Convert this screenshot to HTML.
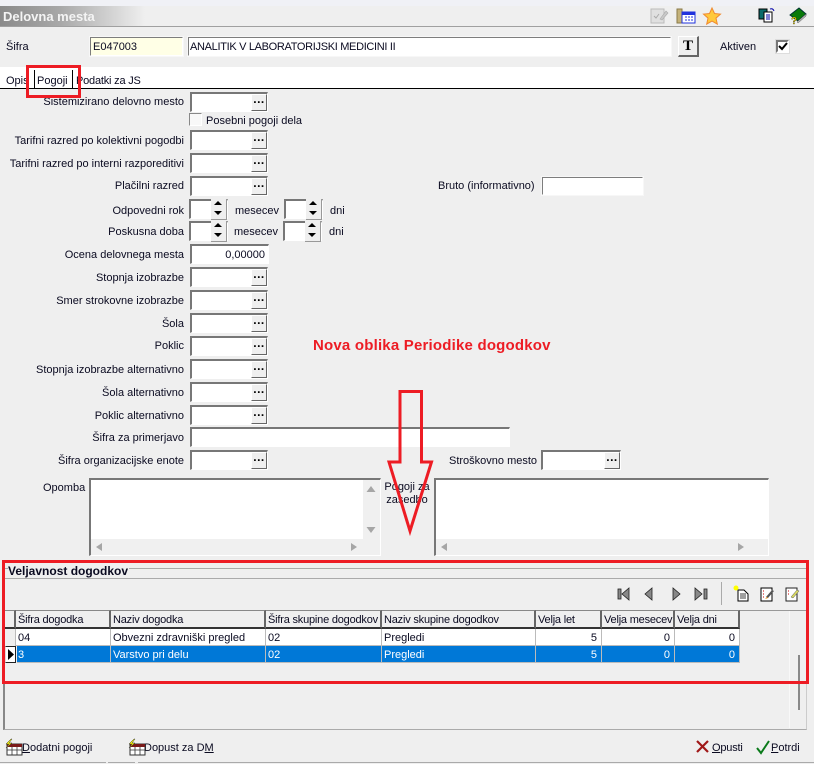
<!DOCTYPE html>
<html><head><meta charset="utf-8"><style>
html,body{margin:0;padding:0}
body{width:814px;height:764px;overflow:hidden;position:relative;background:#efefef;font:11px/13px "Liberation Sans",sans-serif;color:#0a0a20}
div{position:absolute;box-sizing:border-box}
.l{right:630px;white-space:nowrap;text-align:right;height:13px;margin-top:1px}
.t{white-space:nowrap;height:13px;margin-top:1px}
.f{background:#fff;border:2px solid;border-color:#7d7d7d #fff #fff #7d7d7d;outline:1px solid #f7f7f7;outline-offset:-1px}
.i{left:190px;width:78px;height:20px;background:#fff;border-top:2px solid #777;border-left:2px solid #777;border-right:1px solid #fff;border-bottom:1px solid #fff}
.b{left:59px;top:0;width:16px;height:17px;background:#efefef;border-right:1px solid #666;border-bottom:1px solid #666;border-left:1px solid #fff;border-top:1px solid #fff;font:bold 12px/9px "Liberation Sans",sans-serif;text-align:center;color:#000;letter-spacing:.5px}
.s{width:39px;height:20px;background:#fff;border-top:2px solid #777;border-left:2px solid #777;border-right:1px solid #fff;border-bottom:1px solid #fff}
.s i{position:absolute;right:0;top:-2px;width:15px;height:10px;background:#efefef;border:1px solid #999;border-width:0 1px 1px 0}
.s u{position:absolute;right:0;top:8px;width:15px;height:10px;background:#efefef;border-right:1px solid #999;border-bottom:1px solid #999}
.s i:after{content:"";position:absolute;left:3px;top:2px;border:4px solid transparent;border-top:0;border-bottom:4px solid #000}
.s u:after{content:"";position:absolute;left:3px;top:2px;border:4px solid transparent;border-bottom:0;border-top:4px solid #000}
.h{top:610px;height:19px;border-top:1px solid #888;border-right:2px solid #666;border-bottom:2px solid #333;background:#efefef;padding:3px 0 0 2px;white-space:nowrap;overflow:hidden;letter-spacing:-.2px}
.c{height:17px;padding:3px 2px 0 2px;white-space:nowrap;overflow:hidden;background:#fff;border-right:1px solid #bbb;border-bottom:1px solid #bbb}
.r1{top:629px}.r2{top:646px;background:#0078d7;color:#fff}
.n{text-align:right;padding-right:4px}
</style></head><body>
<div style="left:0;top:0;width:814px;height:6px;background:#f0f1f6"></div>
<div style="left:0;top:6px;width:814px;height:20px;background:linear-gradient(90deg,#8a8a8a 0,#a8a8a8 60px,#efefef 145px)"></div>
<div style="left:0;top:26px;width:814px;height:1px;background:#a0a0a0"></div>
<div class="t" style="left:3px;top:9px;margin:0;font:bold 13px/15px 'Liberation Sans',sans-serif;color:#f4f4f4">Delovna mesta</div>

<div class="t" style="left:6px;top:40px">Šifra</div>
<div class="f" style="left:89px;top:36px;width:95px;height:21px;background:#ffffe6;padding:3px 0 0 2px">E047003</div>
<div class="f" style="left:187px;top:36px;width:485px;height:21px;padding:3px 0 0 1px;letter-spacing:-.32px">ANALITIK V LABORATORIJSKI MEDICINI II</div>
<div style="left:678px;top:36px;width:21px;height:21px;background:#efefef;border:1px solid;border-color:#fff #666 #666 #fff;border-right-width:2px;border-bottom-width:2px;font:bold 15px/18px 'Liberation Serif',serif;text-align:center;color:#000">T</div>
<div class="t" style="left:720px;top:40px">Aktiven</div>
<div style="left:776px;top:40px;width:13px;height:13px;background:#fff;border:2px solid;border-color:#777 #fff #fff #777;outline:1px solid #ddd"></div>

<div style="left:0;top:67px;width:814px;height:21px;background:#fff"></div>
<div style="left:0;top:88px;width:814px;height:1px;background:#000"></div>
<div style="left:34px;top:70px;width:1px;height:18px;background:#000"></div>
<div style="left:72px;top:70px;width:1px;height:18px;background:#000"></div>
<div class="t" style="left:6px;top:74px">Opis</div>
<div class="t" style="left:37px;top:74px">Pogoji</div>
<div class="t" style="left:76px;top:74px;letter-spacing:-.2px">Podatki za JS</div>

<div class="l" style="top:95px">Sistemizirano delovno mesto</div>
<div class="i" style="top:92px"><div class="b">...</div></div>
<div style="left:189px;top:113px;width:13px;height:13px;background:#f8f8f8;border:1px solid #888;border-right-color:#fff;border-bottom-color:#fff"></div>
<div class="t" style="left:206px;top:114px">Posebni pogoji dela</div>

<div class="l" style="top:134px">Tarifni razred po kolektivni pogodbi</div>
<div class="i" style="top:130px"><div class="b">...</div></div>
<div class="l" style="top:157px">Tarifni razred po interni razporeditivi</div>
<div class="i" style="top:153px"><div class="b">...</div></div>
<div class="l" style="top:179px">Plačilni razred</div>
<div class="i" style="top:176px"><div class="b">...</div></div>
<div class="t" style="left:438px;top:179px">Bruto (informativno)</div>
<div class="f" style="left:541px;top:176px;width:103px;height:20px"></div>

<div class="l" style="top:204px">Odpovedni rok</div>
<div class="s" style="left:189px;top:199px"><i></i><u></u></div>
<div class="t" style="left:235px;top:204px">mesecev</div>
<div class="s" style="left:284px;top:199px"><i></i><u></u></div>
<div class="t" style="left:330px;top:204px">dni</div>
<div class="l" style="top:225px">Poskusna doba</div>
<div class="s" style="left:189px;top:221px"><i></i><u></u></div>
<div class="t" style="left:234px;top:225px">mesecev</div>
<div class="s" style="left:283px;top:221px"><i></i><u></u></div>
<div class="t" style="left:329px;top:225px">dni</div>

<div class="l" style="top:248px">Ocena delovnega mesta</div>
<div class="i" style="top:244px;width:79px;text-align:right;padding:3px 3px 0 0">0,00000</div>
<div class="l" style="top:271px">Stopnja izobrazbe</div>
<div class="i" style="top:267px"><div class="b">...</div></div>
<div class="l" style="top:294px">Smer strokovne izobrazbe</div>
<div class="i" style="top:290px"><div class="b">...</div></div>
<div class="l" style="top:317px">Šola</div>
<div class="i" style="top:313px"><div class="b">...</div></div>
<div class="l" style="top:339px">Poklic</div>
<div class="i" style="top:336px"><div class="b">...</div></div>
<div class="l" style="top:363px">Stopnja izobrazbe alternativno</div>
<div class="i" style="top:359px"><div class="b">...</div></div>
<div class="l" style="top:386px">Šola alternativno</div>
<div class="i" style="top:382px"><div class="b">...</div></div>
<div class="l" style="top:409px">Poklic alternativno</div>
<div class="i" style="top:405px"><div class="b">...</div></div>
<div class="l" style="top:431px">Šifra za primerjavo</div>
<div class="i" style="top:427px;width:320px"></div>
<div class="l" style="top:454px">Šifra organizacijske enote</div>
<div class="i" style="top:450px"><div class="b">...</div></div>
<div class="t" style="left:449px;top:454px">Stroškovno mesto</div>
<div class="i" style="left:541px;top:450px;width:80px"><div class="b" style="left:61px">...</div></div>

<div class="t" style="left:43px;top:481px">Opomba</div>
<div class="i" style="left:89px;top:478px;width:292px;height:78px"></div>
<div style="left:363px;top:480px;width:17px;height:59px;background:#f0f0f0"></div>
<div style="left:91px;top:539px;width:289px;height:16px;background:#f0f0f0"></div>
<div class="t" style="left:382px;top:480px;width:50px;text-align:center;height:auto">Pogoji za<br>zasedbo</div>
<div class="i" style="left:434px;top:478px;width:335px;height:78px"></div>
<div style="left:436px;top:539px;width:332px;height:16px;background:#f0f0f0"></div>

<!-- group -->
<div style="left:3px;top:568px;width:804px;height:162px;border:1px solid #aaa;border-left:2px solid #888;border-right:1px solid #ccc;border-bottom:1px solid #aaa"></div>
<div style="left:5px;top:578px;width:802px;height:1px;background:#aaa"></div>
<div style="left:789px;top:611px;width:1px;height:117px;background:#f8f8f8"></div>
<div style="left:5px;top:610px;width:802px;height:1px;background:#999"></div>
<div class="t" style="left:8px;top:564px;font-weight:bold;font-size:12px;background:#efefef;padding-right:1px">Veljavnost dogodkov</div>
<div style="left:798px;top:655px;width:2px;height:55px;background:#888"></div>
<div style="left:721px;top:582px;width:1px;height:23px;background:#aaa"></div>

<!-- table -->
<div class="h" style="left:5px;width:11px"></div>
<div class="h" style="left:16px;width:95px">Šifra dogodka</div>
<div class="h" style="left:111px;width:155px">Naziv dogodka</div>
<div class="h" style="left:266px;width:116px">Šifra skupine dogodkov</div>
<div class="h" style="left:382px;width:154px">Naziv skupine dogodkov</div>
<div class="h" style="left:536px;width:66px">Velja let</div>
<div class="h" style="left:602px;width:73px">Velja mesecev</div>
<div class="h" style="left:675px;width:65px">Velja dni</div>

<div style="left:5px;top:629px;width:11px;height:17px;background:#efefef;border-right:1px solid #bbb"></div>
<div style="left:5px;top:646px;width:11px;height:17px;background:#fff;border:1px solid #222;border-left-color:#ddd"></div>
<div class="c r1" style="left:16px;width:95px">04</div>
<div class="c r1" style="left:111px;width:155px">Obvezni zdravniški pregled</div>
<div class="c r1" style="left:266px;width:116px">02</div>
<div class="c r1" style="left:382px;width:154px">Pregledi</div>
<div class="c r1 n" style="left:536px;width:66px">5</div>
<div class="c r1 n" style="left:602px;width:73px">0</div>
<div class="c r1 n" style="left:675px;width:65px">0</div>
<div class="c r2" style="left:17px;width:94px;padding-left:1px">3</div>
<div class="c r2" style="left:111px;width:155px">Varstvo pri delu</div>
<div class="c r2" style="left:266px;width:116px">02</div>
<div class="c r2" style="left:382px;width:154px">Pregledi</div>
<div class="c r2 n" style="left:536px;width:66px">5</div>
<div class="c r2 n" style="left:602px;width:73px">0</div>
<div class="c r2 n" style="left:675px;width:65px">0</div>

<!-- footer -->
<div style="left:0;top:762px;width:106px;height:1px;background:#aaa"></div>
<div style="left:108px;top:762px;width:27px;height:1px;background:#aaa"></div>
<div style="left:138px;top:762px;width:676px;height:1px;background:#aaa"></div>
<div class="t" style="left:22px;top:741px"><u style="text-decoration:underline">D</u>odatni pogoji</div>
<div class="t" style="left:144px;top:741px">Dopust za D<u>M</u></div>
<div class="t" style="left:712px;top:741px;letter-spacing:-.2px"><u>O</u>pusti</div>
<div class="t" style="left:771px;top:741px"><u>P</u>otrdi</div>

<div class="t" style="left:313px;top:336px;font:bold 15px/18px 'Liberation Sans',sans-serif;letter-spacing:.2px;color:#ed1c24;height:18px">Nova oblika Periodike dogodkov</div>

<svg width="814" height="764" style="position:absolute;left:0;top:0" xmlns="http://www.w3.org/2000/svg">
<!-- scroll arrows -->
<g fill="#a6a6a6">
<path d="M371 486l4.500 6h-9z"/><path d="M366.500 527h9l-4.500 6z"/>
<path d="M102 543v8l-6-4z"/><path d="M351 543l6 4-6 4z"/>
<path d="M447 543v8l-6-4z"/><path d="M738 543l6 4-6 4z"/>
</g>
<!-- top icons -->
<g>
<rect x="651" y="9" width="13" height="14" fill="#e0e0e0" stroke="#bbb"/><path d="M654 16l2 2 3-4" stroke="#aaa" fill="none"/><path d="M660 19l6-8 2 2-6 7z" fill="#c8c8c8" stroke="#aaa" stroke-width=".6"/>
<rect x="677" y="9" width="5" height="14" fill="#c4b27a" stroke="#8a7a4a"/>
<rect x="682" y="12" width="13" height="11" fill="#fff" stroke="#2233dd"/><rect x="682" y="12" width="13" height="3" fill="#2233dd"/><path d="M685 17h8M685 20h8" stroke="#2233dd" stroke-dasharray="2 1"/>
<path d="M712 8l2.500 5.500 6 .6-4.500 4 1.300 6-5.300-3-5.300 3 1.300-6-4.500-4 6-.6z" fill="#ffc93c" stroke="#f08a30"/>
<rect x="759" y="9" width="8" height="10" fill="#0a6a6a" stroke="#000"/><rect x="764" y="12" width="8" height="10" fill="#fff" stroke="#000"/><path d="M766 15h4M766 17h4M766 19h4" stroke="#00a"/><path d="M770 9q3-1 4 2" fill="none" stroke="#00a"/>
<path d="M790 15l9-7 7 6-8 7z" fill="#0a7a0a" stroke="#033"/><path d="M798 21l8-7v2l-8 7-1-1z" fill="#bbb" stroke="#555" stroke-width=".5"/><text x="791" y="24" font-family="Liberation Sans" font-weight="bold" font-size="10" fill="#f5e000" stroke="#000" stroke-width=".3">?</text>
</g>
<!-- check in aktiven -->
<path d="M779 46l3 3 5-6" fill="none" stroke="#000" stroke-width="2"/>
<!-- nav -->
<g fill="#888" stroke="#222" stroke-width=".8">
<rect x="618" y="589" width="3" height="10"/><path d="M629 588v12l-7-6z"/>
<path d="M652 588v12l-7-6z"/>
<path d="M673 588v12l7-6z"/>
<path d="M695 588v12l7-6z"/><rect x="704" y="589" width="3" height="10"/>
</g>
<!-- record icons -->
<g>
<path d="M738 590h6l4 4v7h-10z" fill="#fff" stroke="#000"/><path d="M740 594h6M740 596h6M740 598h6" stroke="#000" stroke-width=".8"/><circle cx="736" cy="588" r="2.500" fill="#ff0"/>
<rect x="761" y="588" width="11" height="13" fill="#fff" stroke="#000"/><path d="M763 591h1M763 594h1M763 597h1" stroke="#c00"/><path d="M766 597l6-7 2 1-6 7z" fill="#555"/><path d="M765 599l2-2 1 1z" fill="#e80"/>
<rect x="786" y="588" width="11" height="13" fill="#fff" stroke="#222"/><path d="M788 591h1M788 594h1" stroke="#c00"/><path d="M791 597l6-7 2 1-6 7z" fill="#dcdc60" stroke="#555" stroke-width=".5"/>
</g>
<!-- triangle arrow row marker -->
<path d="M8 649v11l6-5.500z" fill="#000"/>
<!-- footer icons -->
<g>
<rect x="7" y="744" width="15" height="11" fill="#fff" stroke="#333"/><rect x="7" y="744" width="15" height="3" fill="#7a1a1a"/><path d="M7 750h15M12 747v8M17 747v8" stroke="#333" stroke-width=".8"/><path d="M11 739l-5 5h3l-3 4 6-5h-3l3-4z" fill="#ff0" stroke="#333" stroke-width=".5"/>
<rect x="130" y="744" width="15" height="11" fill="#fff" stroke="#333"/><rect x="130" y="744" width="15" height="3" fill="#7a1a1a"/><path d="M130 750h15M135 747v8M140 747v8" stroke="#333" stroke-width=".8"/><path d="M134 739l-5 5h3l-3 4 6-5h-3l3-4z" fill="#ff0" stroke="#333" stroke-width=".5"/>
<path d="M697 741l11 11M708 741l-11 11" stroke="#a01818" stroke-width="2.200"/>
<path d="M757 748l4 5 8-12" fill="none" stroke="#0a7a1a" stroke-width="2"/>
</g>
<!-- red annotations -->
<g fill="none" stroke="#ed1c24" stroke-width="3">
<rect x="27.500" y="66.500" width="52" height="30"/>
<rect x="3.500" y="561.500" width="804" height="121"/>
<path d="M400 391.500h21.500v70.500h10L410 531 389 462h11z"/>
</g>
</svg>
</body></html>
